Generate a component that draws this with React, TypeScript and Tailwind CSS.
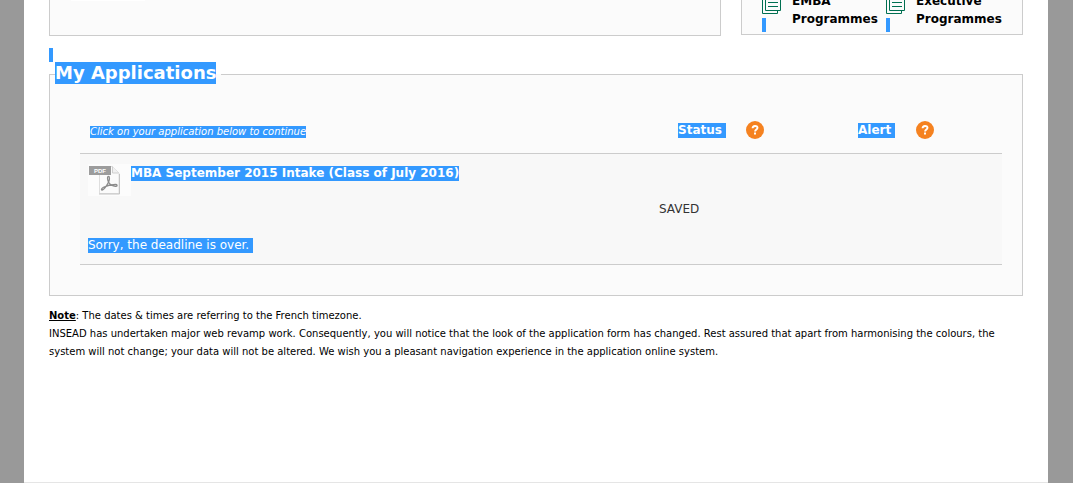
import type { ReactNode } from "react";

const programmes = ["EMBA Programmes", "Executive Programmes"];

function Marked({ children, className = "" }: { children: ReactNode; className?: string }) {
  return <span className={`inline-block bg-[#3399ff] text-white ${className}`}>{children}</span>;
}

function PagesIcon() {
  return (
    <svg width="20" height="20" viewBox="0 0 20 20" fill="none" stroke="#006f51">
      <path d="M3.500 0.500h15v16h-15z" />
      <path d="M3 3.500H0.500v16h15V17" />
      <path d="M6 4.500h10M6 8.500h10M6 12.500h10" />
    </svg>
  );
}

function PdfIcon() {
  return (
    <svg width="43" height="32" viewBox="0 0 43 32" className="shrink-0">
      <rect width="43" height="32" fill="#fcfcfc" />
      <path d="M11.500 2.500h13l6.500 6.500v20.500h-19.500z" fill="#fbfbfb" stroke="#dedede" />
      <path d="M24.500 2.500v6.500h6" fill="#f1f1f1" stroke="#cfcfcf" />
      <path d="M11 30h20.500V10" fill="none" stroke="#c4c4c4" />
      <rect x="1" y="2" width="22" height="9" fill="#9c9c9c" />
      <text x="6" y="9" fill="#fff" fontSize="6" fontWeight="bold" fontFamily="Liberation Sans, sans-serif">
        PDF
      </text>
      <path
        d="M20.500 12.500c-1.500 0-1 3.500 0 5.500c1.500 2.500 4.500 4.500 7.500 4.300c1.500-0.300 1.500-1.800-0.500-1.800c-4 0-9 1.200-12 2.800c-2 1.200-2.500 2.700-1.500 2.700c2 0 5.500-5.500 6.800-8.500c0.800-2 1-5-0.300-5z"
        fill="none"
        stroke="#8b8b8b"
        strokeWidth="1.300"
      />
    </svg>
  );
}

function HelpButton({ label }: { label: string }) {
  return (
    <button type="button" aria-label={label} className="block">
      <svg width="18" height="18" viewBox="0 0 18 18">
        <circle cx="9" cy="9" r="9" fill="#f58220" />
        <path d="M6.600 7.300c0-3.100 4.900-3 4.900-0.500c0 1.700-2.400 1.700-2.400 3.700" fill="none" stroke="#fff" strokeWidth="1.900" />
        <rect x="8" y="11.500" width="2" height="2" fill="#fff" />
      </svg>
    </button>
  );
}

function TopPanels() {
  return (
    <div className="flex items-start gap-5">
      <div className="flex-1 border border-t-0 border-[#cccccc] bg-[#fbfbfb] pb-[34px] pl-[21px]">
        <div className="h-px w-[74px] bg-white" />
      </div>
      <div className="flex w-[282px] overflow-hidden border border-t-0 border-[#cccccc] bg-[#fbfbfb] pl-5">
        {programmes.map((name) => (
          <div key={name} className="-mt-2 flex w-[124px] shrink-0 pb-[2px]">
            <div className="w-[30px] shrink-0 pt-[2px]">
              <PagesIcon />
              <div className="mt-1 h-[14px] w-1 bg-[#3399ff]" />
            </div>
            <a href="#" className="h-9 text-[12px] leading-[18px] font-bold text-black">
              {name}
            </a>
          </div>
        ))}
      </div>
    </div>
  );
}

function Applications() {
  return (
    <fieldset className="border border-[#cccccc] bg-[#fbfbfb] pr-5 pb-[30px] pl-[30px]">
      <legend className="-ml-[25px] pr-[5px]">
        <Marked className="block text-[18px] leading-[22px] font-bold">My Applications</Marked>
      </legend>
      <table className="mt-6 w-full table-fixed border-collapse text-left text-[12px] leading-[15px]">
        <colgroup>
          <col />
          <col className="w-[180px]" />
          <col className="w-[165px]" />
        </colgroup>
        <thead>
          <tr className="h-[43px] border-b border-[#cccccc] align-top">
            <th className="pt-[14px] pl-[10px] font-normal">
              <Marked className="block w-fit text-[10px] leading-[12px] italic">
                Click on your application below to continue
              </Marked>
            </th>
            <th className="pt-[11px] pl-[21px]">
              <div className="flex items-center">
                <Marked className="w-12">Status</Marked>
                <div className="ml-5">
                  <HelpButton label="About the status" />
                </div>
              </div>
            </th>
            <th className="pt-[11px] pl-[21px]">
              <div className="flex items-center">
                <Marked className="w-[37px]">Alert</Marked>
                <div className="ml-[21px]">
                  <HelpButton label="About alerts" />
                </div>
              </div>
            </th>
          </tr>
        </thead>
        <tbody>
          <tr className="h-[111px] border-b border-[#cccccc] bg-[#f8f8f8]">
            <td className="pt-[10px] pb-[11px] pl-2 align-top">
              <div className="flex items-start">
                <PdfIcon />
                <a href="#" className="mt-[2px] font-bold">
                  <Marked className="block">MBA September 2015 Intake (Class of July 2016)</Marked>
                </a>
              </div>
              <p className="mt-[42px]">
                <Marked className="block w-fit pr-1">Sorry, the deadline is over.</Marked>
              </p>
            </td>
            <td className="pt-[2px] pl-[2px] text-[#333333]">SAVED</td>
            <td />
          </tr>
        </tbody>
      </table>
    </fieldset>
  );
}

export default function App() {
  return (
    <div className="min-h-screen bg-[#999999] pr-[25px] pl-6 font-['Verdana','DejaVu_Sans',sans-serif] text-black">
      <main className="min-h-screen border-b border-[#e5e5e5] bg-white px-[25px]">
        <TopPanels />
        <div className="mt-3 h-[14px] w-1 bg-[#3399ff]" />
        <Applications />
        <div className="mt-[11px] text-[10px] leading-[18px]">
          <p>
            <b className="underline">Note</b>: The dates &amp; times are referring to the French timezone.
          </p>
          <p>
            INSEAD has undertaken major web revamp work. Consequently, you will notice that the look of the application
            form has changed. Rest assured that apart from harmonising the colours, the system will not change; your data
            will not be altered. We wish you a pleasant navigation experience in the application online system.
          </p>
        </div>
      </main>
    </div>
  );
}
